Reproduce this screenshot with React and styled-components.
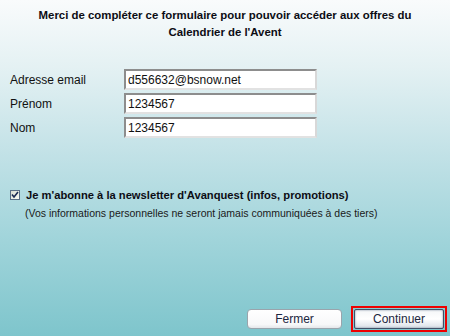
import React, { useState } from 'react';
import styled, { createGlobalStyle } from 'styled-components';

const GlobalStyle = createGlobalStyle`
  html, body {
    margin: 0;
    padding: 0;
  }
  body {
    font-family: "Liberation Sans", Arial, sans-serif;
  }
`;

const Page = styled.div`
  box-sizing: border-box;
  width: 450px;
  height: 336px;
  display: flex;
  flex-direction: column;
  background: linear-gradient(180deg, #f9fbfc 0%, #e4f1f3 20%, #c3e2e7 45%, #a2d5db 70%, #7ec5cc 100%);
  color: #000;
  font-size: 12px;
`;

const Title = styled.h1`
  margin: 7px 0 0;
  font-size: 11.4px;
  line-height: 17px;
  font-weight: bold;
  text-align: center;
  color: #0c0c14;
`;

const FormGrid = styled.div`
  display: grid;
  grid-template-columns: 114px 193px;
  row-gap: 3px;
  margin: 28px 0 0 10px;
  align-items: center;
`;

const Label = styled.label`
  font-size: 12px;
  color: #111;
`;

const Field = styled.input`
  box-sizing: border-box;
  width: 193px;
  height: 21px;
  margin: 0;
  padding: 0 2px;
  border: 2px solid;
  border-color: #8d8d8d #d8d8d8 #e2e2e2 #8d8d8d;
  background: #fff;
  font-family: "Liberation Sans", Arial, sans-serif;
  font-size: 12px;
  color: #111;
  outline: none;
`;

const Newsletter = styled.div`
  margin: 50px 0 0 10px;
`;

const CheckRow = styled.label`
  display: flex;
  align-items: center;
  gap: 6px;
  font-weight: bold;
  font-size: 11.2px;
  color: #0c0c14;
  line-height: 14px;
`;

const Box = styled.span`
  display: inline-flex;
  width: 10px;
  height: 10px;
  box-sizing: border-box;
  border: 1px solid #5a6e86;
  background: linear-gradient(135deg, #d9dcd2, #fbfbf6);
  align-items: center;
  justify-content: center;
`;

const Note = styled.p`
  margin: 4px 0 0 15px;
  font-size: 10.5px;
  line-height: 14px;
  color: #1a1a1a;
`;

const Footer = styled.div`
  margin-top: auto;
  display: flex;
  justify-content: flex-end;
  align-items: center;
  gap: 9px;
  padding: 0 3px 4px 0;
`;

const Button = styled.button`
  box-sizing: border-box;
  width: ${p => p.$w}px;
  height: 20px;
  margin: 0;
  padding: 0;
  border: 1px solid ${p => (p.$focused ? '#3f4f66' : '#9aa4ac')};
  border-radius: ${p => (p.$focused ? '2px' : '4px')};
  background: ${p =>
    p.$focused
      ? 'linear-gradient(180deg, #f4f6f8 0%, #ffffff 50%, #d9dfe6 100%)'
      : 'linear-gradient(180deg, #ffffff 0%, #f7f8f9 80%, #e4e7ea 100%)'};
  box-shadow: ${p => (p.$focused ? 'inset 0 0 2px #6a7a90' : 'none')};
  font-family: "Liberation Sans", Arial, sans-serif;
  font-size: 12px;
  color: #1c2640;
  cursor: pointer;
`;

const FocusRing = styled.div`
  box-sizing: border-box;
  padding: 1px;
  border: 2px solid #ee0000;
`;

function CheckMark() {
  return (
    <svg width="8" height="8" viewBox="0 0 8 8">
      <path d="M1 3.5 L3 6 L7 1" fill="none" stroke="#1b2a52" strokeWidth="1.6" />
    </svg>
  );
}

export default function App() {
  const [email, setEmail] = useState('d556632@bsnow.net');
  const [prenom, setPrenom] = useState('1234567');
  const [nom, setNom] = useState('1234567');

  return (
    <Page>
      <GlobalStyle />
      <Title>
        Merci de compléter ce formulaire pour pouvoir accéder aux offres du
        <br />
        Calendrier de l'Avent
      </Title>

      <FormGrid>
        <Label>Adresse email</Label>
        <Field value={email} onChange={e => setEmail(e.target.value)} />
        <Label>Prénom</Label>
        <Field value={prenom} onChange={e => setPrenom(e.target.value)} />
        <Label>Nom</Label>
        <Field value={nom} onChange={e => setNom(e.target.value)} />
      </FormGrid>

      <Newsletter>
        <CheckRow>
          <Box>
            <CheckMark />
          </Box>
          Je m'abonne à la newsletter d'Avanquest (infos, promotions)
        </CheckRow>
        <Note>(Vos informations personnelles ne seront jamais communiquées à des tiers)</Note>
      </Newsletter>

      <Footer>
        <Button $w={95}>Fermer</Button>
        <FocusRing>
          <Button $w={90} $focused>Continuer</Button>
        </FocusRing>
      </Footer>
    </Page>
  );
}
